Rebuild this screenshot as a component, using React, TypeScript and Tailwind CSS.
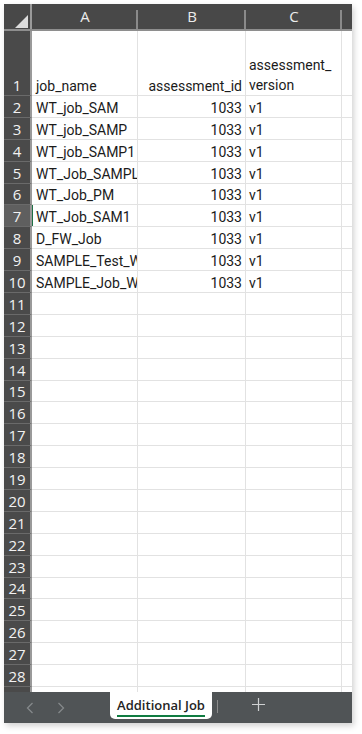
import React from "react";

const cellFont = { fontFamily: 'Roboto, "Liberation Sans", Arial, sans-serif' };
const uiFont = { fontFamily: '"Open Sans", "Noto Sans", sans-serif' };

const rows: [string, string, string][] = [
  ["WT_job_SAM", "1033", "v1"],
  ["WT_job_SAMP", "1033", "v1"],
  ["WT_job_SAMP1", "1033", "v1"],
  ["WT_Job_SAMPLE", "1033", "v1"],
  ["WT_Job_PM", "1033", "v1"],
  ["WT_Job_SAM1", "1033", "v1"],
  ["D_FW_Job", "1033", "v1"],
  ["SAMPLE_Test_WT", "1033", "v1"],
  ["SAMPLE_Job_WT", "1033", "v1"],
];

function RowHead({ n, active }: { n: number; active?: boolean }) {
  return (
    <div
      className={`w-[28px] shrink-0 h-full flex items-end justify-center text-[15px] leading-[19px] text-[#f2f2f2] border-b border-[#6a6a6a] border-r-2 border-r-[#9a9a9a] ${active ? "bg-[#5f5f5f]" : "bg-[#4a4a4a]"}`}
      style={uiFont}
    >
      {n}
    </div>
  );
}

function Row({ n, a = "", b = "", c = "", tall, active }: { n: number; a?: string; b?: string; c?: string; tall?: boolean; active?: boolean }) {
  return (
    <div className={`flex shrink-0 ${tall ? "h-[65px]" : "h-[21.9px]"}`} style={cellFont}>
      <RowHead n={n} active={active} />
      <div className={`w-[106px] shrink-0 h-full border-r border-b border-[#e2e2e2] flex items-end pl-[4px] overflow-hidden whitespace-nowrap text-[14px] text-[#1b1b1b] leading-[18px] ${active ? "shadow-[inset_1px_0_0_#1e7145]" : ""}`}>
        {a}
      </div>
      <div className="w-[108px] shrink-0 h-full border-r border-b border-[#e2e2e2] flex items-end justify-end pr-[3px] text-[14px] text-[#1b1b1b] leading-[18px] whitespace-nowrap">
        {b}
      </div>
      <div className={`w-[96px] shrink-0 h-full border-r border-b border-[#e2e2e2] flex items-end pl-[3px] text-[14px] text-[#1b1b1b] whitespace-pre-line ${tall ? "leading-[20px]" : "leading-[18px]"}`}>
        {c}
      </div>
      <div className="flex-1 h-full border-b border-[#e2e2e2]" />
    </div>
  );
}

export default function App() {
  const empty = Array.from({ length: 19 }, (_, i) => i + 11);
  return (
    <div className="w-[362px] h-[734px] bg-white pt-[4px] pl-[4px]">
      <div className="w-[348px] h-[719px] flex flex-col overflow-hidden bg-white shadow-[2px_3px_6px_rgba(0,0,0,0.18)]">
        <div className="flex-1 flex flex-col overflow-hidden">
          {/* column headers */}
          <div className="flex shrink-0 h-[27px] bg-[#484848] border-b-2 border-[#8e8e8e] text-[15px] text-[#ececec]" style={uiFont}>
            <div className="w-[28px] shrink-0 relative border-r-2 border-[#9a9a9a]">
              <svg className="absolute left-[11px] top-[11px]" width="13" height="13" viewBox="0 0 13 13">
                <polygon points="13,0 13,13 0,13" fill="#dcdcdc" />
              </svg>
            </div>
            <div className="w-[106px] shrink-0 flex items-center justify-center relative">
              A
              <span className="absolute right-0 top-[6px] bottom-0 w-[2px] bg-[#8a8a8a]" />
            </div>
            <div className="w-[108px] shrink-0 flex items-center justify-center relative">
              B
              <span className="absolute right-0 top-[6px] bottom-0 w-[2px] bg-[#8a8a8a]" />
            </div>
            <div className="w-[96px] shrink-0 flex items-center justify-center relative">
              C
              <span className="absolute right-0 top-[6px] bottom-0 w-[2px] bg-[#8a8a8a]" />
            </div>
            <div className="flex-1" />
          </div>

          <Row n={1} a="job_name" b="assessment_id" c={"assessment_\nversion"} tall />
          {rows.map((r, i) => (
            <Row key={i} n={i + 2} a={r[0]} b={r[1]} c={r[2]} active={i + 2 === 7} />
          ))}
          {empty.map((n) => (
            <Row key={n} n={n} />
          ))}
        </div>

        {/* sheet tabs */}
        <div className="h-[31px] shrink-0 bg-[#505456] flex items-start" style={uiFont}>
          <div className="w-[106px] h-full flex items-center gap-[23px] pl-[22px]">
            <svg width="8" height="12" viewBox="0 0 8 12" fill="none" stroke="#85898b" strokeWidth="1.3">
              <path d="M6.5 1 L1.5 6 L6.5 11" />
            </svg>
            <svg width="8" height="12" viewBox="0 0 8 12" fill="none" stroke="#85898b" strokeWidth="1.3">
              <path d="M1.5 1 L6.5 6 L1.5 11" />
            </svg>
          </div>
          <div className="w-[102px] h-[27px] bg-white rounded-b-[5px] flex flex-col items-center justify-center">
            <span className="text-[13px] font-semibold text-[#242424] leading-[18px] border-b-2 border-[#107c41] pb-[1px] mt-[1px]">
              Additional Job
            </span>
          </div>
          <div className="w-px h-[13px] bg-[#8c8c8c] ml-[5px] mt-[8px]" />
          <div className="w-[80px] h-full flex items-center justify-center -mt-[3px]">
            <svg width="13" height="13" viewBox="0 0 13 13" stroke="#cfd1d2" strokeWidth="1.2">
              <path d="M6.5 0 V13 M0 6.5 H13" />
            </svg>
          </div>
        </div>
      </div>
    </div>
  );
}
